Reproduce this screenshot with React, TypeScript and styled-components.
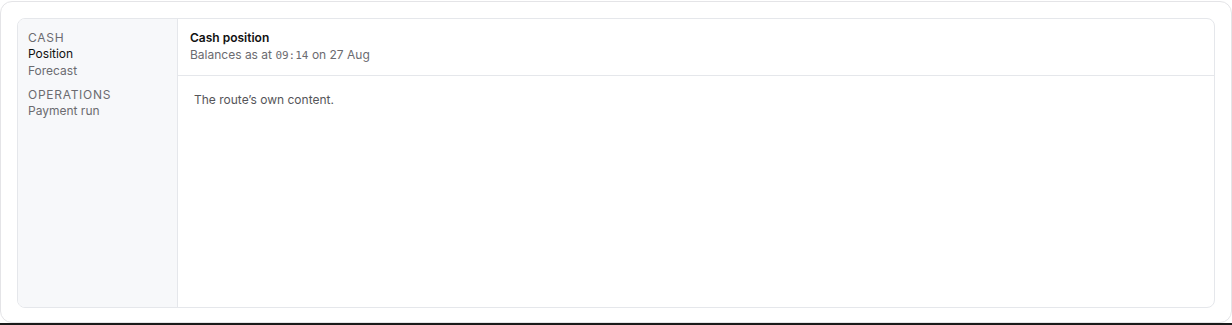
import styled, { createGlobalStyle } from "styled-components";

const GlobalStyle = createGlobalStyle`
  html, body {
    margin: 0;
    padding: 0;
    background: #ffffff;
  }
  body {
    font-family: Inter, "Noto Sans", sans-serif;
    -webkit-font-smoothing: antialiased;
  }
`;

const Page = styled.div`
  display: flex;
  flex-direction: column;
  padding-top: 1px;
`;

const Frame = styled.div`
  box-sizing: border-box;
  height: 322px;
  border: 1px solid #e4e4e7;
  border-radius: 12px;
  padding: 16px 16px 14px;
  display: flex;
`;

const BottomRule = styled.div`
  height: 2px;
  background: #1a1a1a;
`;

const Shell = styled.div`
  flex: 1;
  display: grid;
  grid-template-columns: 160px 1fr;
  border: 1px solid #e5e7eb;
  border-radius: 8px;
  overflow: hidden;
`;

const Sidebar = styled.nav`
  background: #f7f8fa;
  border-right: 1px solid #e5e7eb;
  padding: 11px 10px;
  display: flex;
  flex-direction: column;
  gap: 8px;
`;

const Group = styled.div`
  display: flex;
  flex-direction: column;
`;

const GroupLabel = styled.div`
  font-size: 12px;
  line-height: 15px;
  letter-spacing: 0.06em;
  text-transform: uppercase;
  color: #6b6b70;
`;

const NavItem = styled.div<{ $active?: boolean }>`
  font-size: 12px;
  line-height: 17px;
  color: ${({ $active }) => ($active ? "#111111" : "#6b6b70")};
`;

const Main = styled.section`
  display: flex;
  flex-direction: column;
  min-width: 0;
`;

const Header = styled.header`
  padding: 11px 12px 11px;
  border-bottom: 1px solid #e5e7eb;
  display: flex;
  flex-direction: column;
  gap: 1px;
`;

const Title = styled.h1`
  margin: 0;
  font-size: 12px;
  line-height: 16px;
  font-weight: 600;
  color: #111111;
`;

const Subtitle = styled.div`
  font-size: 12px;
  line-height: 16px;
  color: #6b6b70;
`;

const Mono = styled.span`
  font-family: "DejaVu Sans Mono", "Liberation Mono", monospace;
  font-size: 11px;
`;

const Content = styled.div`
  padding: 16px 16px;
  font-size: 12px;
  line-height: 16px;
  color: #555559;
`;

const sections = [
  { id: "cash", title: "Cash", items: [{ label: "Position", active: true }, { label: "Forecast" }] },
  { id: "ops", title: "Operations", items: [{ label: "Payment run" }] },
];

export default function App() {
  return (
    <>
      <GlobalStyle />
      <Page>
        <Frame>
          <Shell>
            <Sidebar>
              {sections.map((s) => (
                <Group key={s.id}>
                  <GroupLabel>{s.title}</GroupLabel>
                  {s.items.map((item) => (
                    <NavItem key={item.label} $active={item.active}>
                      {item.label}
                    </NavItem>
                  ))}
                </Group>
              ))}
            </Sidebar>
            <Main>
              <Header>
                <Title>Cash position</Title>
                <Subtitle>
                  Balances as at <Mono>09:14</Mono> on 27 Aug
                </Subtitle>
              </Header>
              <Content>The route’s own content.</Content>
            </Main>
          </Shell>
        </Frame>
        <BottomRule />
      </Page>
    </>
  );
}
